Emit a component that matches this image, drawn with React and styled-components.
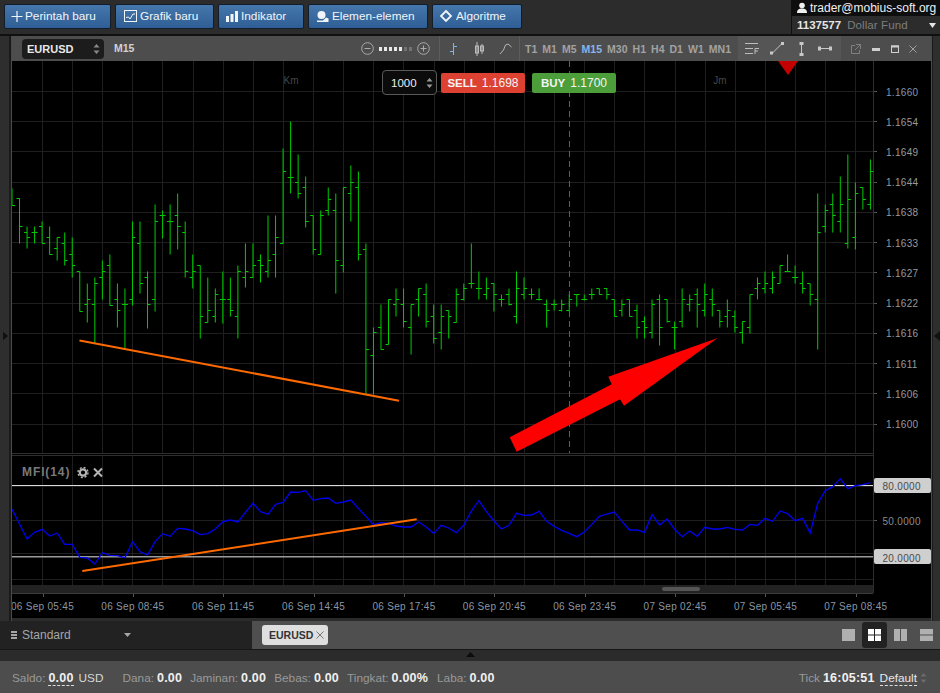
import React from "react";
import styled, { createGlobalStyle } from "styled-components";

const GlobalStyle = createGlobalStyle`
  html, body { margin: 0; padding: 0; background: #2b2b2b; }
  * { box-sizing: border-box; }
`;

// bars: [high, low, open tick, close tick], read in 3x zoom rows (y = 110 + v / 3)
const BARS = [
  [233,284,233,284],[265,400,265,349],[349,415,366,382],[349,398,366,366],[332,400,349,400],[349,433,382,433],
  [382,449,415,382],[366,466,400,450],[382,500,433,466],[484,602,484,602],[518,635,583,568],[501,698,583,518],
  [450,567,501,484],[433,585,466,585],[518,652,568,601],[535,715,583,583],[332,585,568,382],[332,550,400,518],
  [484,655,501,583],[283,602,568,332],[300,383,315,315],[283,433,332,332],[250,417,315,349],[332,500,366,484],
  [433,533,501,484],[466,685,466,617],[501,635,635,601],[535,635,617,552],[484,638,568,568],[501,618,568,601],
  [466,685,617,484],[400,532,501,484],[400,502,501,466],[433,517,450,466],[315,500,484,450],[315,500,433,382],
  [115,400,400,182],[33,250,200,200],[132,265,216,250],[198,350,232,332],[315,432,315,417],[300,433,433,315],
  [232,316,300,267],[250,550,300,451],[232,485,466,232],[165,333,250,216],[182,450,232,433],[400,850,417,718],
  [652,853,736,667],[583,718,652,718],[568,703,703,568],[535,618,583,568],[535,652,583,634],[583,733,652,583],
  [535,618,568,535],[518,652,552,634],[583,700,617,685],[583,717,667,617],[601,683,601,617],[535,635,635,552],
  [518,570,568,535],[400,533,518,518],[484,568,535,535],[501,567,552,535],[518,602,518,552],[552,587,568,568],
  [535,585,552,583],[484,638,617,535],[501,568,552,535],[535,568,552,552],[535,570,568,568],[568,652,583,601],
  [568,600,583,583],[568,602,601,583],[552,603,601,568],[552,587,552,552],[552,570,568,568],[535,567,552,552],
  [535,552,535,552],[535,567,535,552],[568,618,568,618],[568,618,601,583],[568,618,568,618],[583,683,601,652],
  [617,683,634,652],[568,685,667,583],[552,705,568,652],[568,635,568,634],[634,718,652,652],[535,652,634,568],
  [552,603,583,568],[535,652,552,583],[518,617,601,552],[535,618,568,583],[601,650,601,634],[568,652,617,601],
  [601,667,617,652],[634,700,667,634],[552,670,652,552],[501,567,535,518],[484,550,535,518],[484,550,535,501],
  [466,520,518,466],[433,484,484,484],[466,518,501,501],[484,550,518,535],[518,585,518,552],[250,718,568,366],
  [283,367,349,300],[250,367,283,316],[198,367,332,283],[132,415,400,267],[216,417,382,250],[232,298,232,267],
  [148,298,283,182],
];

// MFI(14), same zoom rows (y = 450 + v / 3)
const MFI = [
  178,222,267,247,238,258,249,283,283,322,324,342,308,316,317,323,275,305,315,275,251,259,235,237,242,254,251,237,
  215,210,216,187,160,185,193,163,157,126,127,122,151,146,144,160,156,150,175,199,224,218,220,228,231,231,216,231,
  250,226,234,248,226,183,152,185,213,237,226,190,196,195,184,214,229,241,250,260,246,223,199,192,186,214,240,240,
  247,194,225,207,238,260,243,259,232,237,237,232,238,240,223,226,205,214,183,191,212,205,249,160,122,110,86,116,
  107,104,98,
];

const PRICES = ["1.1660","1.1654","1.1649","1.1644","1.1638","1.1633","1.1627","1.1622","1.1616","1.1611","1.1606","1.1600"];
const TIMES = ["06 Sep 05:45","06 Sep 08:45","06 Sep 11:45","06 Sep 14:45","06 Sep 17:45","06 Sep 20:45","06 Sep 23:45","07 Sep 02:45","07 Sep 05:45","07 Sep 08:45"];
const FRAMES = ["T1","M1","M5","M15","M30","H1","H4","D1","W1","MN1"];

const barX = (i) => 12 + 7.53 * i;
const snap = (v) => Math.round(110 + v / 3) + 0.5;

const barsPath = BARS.map(([hi, lo, open, close], i) => {
  const x = barX(i);
  return `M${x} ${snap(hi)}V${snap(lo)}M${x - 3} ${snap(open)}H${x}M${x} ${snap(close)}H${x + 3}`;
}).join("");

const mfiPoints = MFI.map((v, i) => `${barX(i)},${450 + v / 3}`).join(" ");

const Page = styled.div`
  width: 940px;
  height: 693px;
  display: flex;
  flex-direction: column;
  overflow: hidden;
  background: #2b2b2b;
  font-family: "Liberation Sans", Arial, sans-serif;
`;

const Toolbar = styled.header`
  height: 36px;
  display: flex;
  align-items: flex-start;
  gap: 4px;
  padding: 4px 0 0 4px;
  background: #2c2c2c;
  border-bottom: 2px solid #101010;
`;

const ToolButton = styled.button`
  width: ${(p) => p.$w}px;
  height: 25px;
  display: flex;
  align-items: center;
  gap: ${(p) => p.$gap ?? 3}px;
  padding: 0 0 1px ${(p) => p.$pad ?? 5}px;
  border: 1px solid #0f1d2c;
  border-radius: 2px;
  background: linear-gradient(#4677ab, #2e5e95);
  color: #f2f5f8;
  font: 11.8px "Liberation Sans", Arial, sans-serif;
  white-space: nowrap;
`;

const Account = styled.div`
  margin-left: auto;
  margin-top: -4px;
  width: 149px;
  height: 34px;
  display: flex;
  flex-direction: column;
  white-space: nowrap;
`;

const AccountMail = styled.div`
  height: 16px;
  display: flex;
  align-items: center;
  gap: 2px;
  padding-left: 5px;
  background: #0e0e0e;
  color: #f0f0f0;
  font-size: 12px;
`;

const AccountFund = styled.div`
  flex: 1;
  display: flex;
  align-items: center;
  gap: 6px;
  padding: 0 4px 0 5px;
  background: #2c2c2c;
  border-left: 1px solid #101010;
  font-size: 11.5px;
  letter-spacing: 0.1px;
  color: #7e7e7e;
  b { color: #e6e6e6; letter-spacing: 0; }
  svg { margin-left: auto; }
`;

const Workspace = styled.main`
  height: 585px;
  display: flex;
`;

const SideRail = styled.div`
  width: ${(p) => p.$w}px;
  display: flex;
  align-items: center;
  justify-content: ${(p) => (p.$right ? "flex-end" : "flex-start")};
  padding: 14px ${(p) => (p.$right ? "0" : "3px")} 0;
  background: #2e2e2e;
  border-${(p) => (p.$right ? "left" : "right")}: 1px solid #4a4a4a;
  box-shadow: inset ${(p) => (p.$right ? "1px" : "-2px")} 0 #1a1a1a;
`;

const ChartWindow = styled.section`
  flex: 1;
  display: flex;
  flex-direction: column;
  padding-bottom: 3px;
  min-width: 0;
`;

const WindowHeader = styled.div`
  height: 25px;
  display: flex;
  background: #4d4d4d;
`;

const HeaderGroup = styled.div`
  width: ${(p) => p.$w}px;
  display: flex;
  align-items: center;
  justify-content: ${(p) => p.$justify || "flex-start"};
  padding: ${(p) => p.$pad || "0"};
  background: ${(p) => p.$bg || "transparent"};
  border-left: ${(p) => (p.$edge ? "1px solid #5c5c5c" : "none")};
  color: ${(p) => p.$color || "inherit"};
  flex: ${(p) => (p.$w ? "none" : 1)};
`;

const SymbolSelect = styled.div`
  width: 82px;
  height: 20px;
  display: flex;
  align-items: center;
  justify-content: space-between;
  padding: 0 4px 0 5px;
  border-radius: 4px;
  background: #1c1c1c;
  color: #e8e8e8;
  font-size: 11px;
  font-weight: bold;
`;

const PeriodLabel = styled.span`
  margin-left: 10px;
  margin-top: -2px;
  color: #d2d2d2;
  font-size: 10.5px;
  font-weight: bold;
`;

const ZoomDots = styled.div`
  display: flex;
  gap: 2px;
`;

const ZoomDot = styled.i`
  width: 3px;
  height: 4px;
  background: ${(p) => (p.$on ? "#e8e8e8" : "#727272")};
`;

const Frame = styled.span`
  color: ${(p) => (p.$active ? "#85b6e8" : "#a2a2a2")};
  font-size: 10.5px;
  font-weight: bold;
`;

const ToolIcon = styled.span`
  display: flex;
  margin-left: ${(p) => p.$gap || 0}px;
`;

const ChartArea = styled.div`
  position: relative;
  height: 557px;
  background: #000;
`;

const ChartSvg = styled.svg`
  display: block;
`;

const AxisText = styled.text`
  font: 10px "Liberation Sans", Arial, sans-serif;
  letter-spacing: 0.3px;
  fill: ${(p) => p.$fill || "#8a96a3"};
  text-anchor: ${(p) => p.$anchor || "start"};
`;

const Watermark = styled.text`
  font: 10px "Liberation Sans", Arial, sans-serif;
  fill: #474747;
  text-anchor: middle;
`;

const MfiTitle = styled.text`
  font: bold 12px "Liberation Sans", Arial, sans-serif;
  letter-spacing: 0.9px;
  fill: #7a7a7a;
`;

const OrderPanel = styled.div`
  position: absolute;
  left: 370px;
  top: 9px;
  display: flex;
  align-items: center;
`;

const QtyBox = styled.div`
  width: 55px;
  height: 25px;
  display: flex;
  align-items: center;
  justify-content: space-between;
  padding: 0 3px 0 8px;
  border: 1px solid #5a5a5a;
  border-radius: 4px;
  background: #0b0b0b;
  color: #eee;
  font-size: 11.5px;
`;

const TradeButton = styled.div`
  width: 84px;
  height: 20px;
  margin-left: ${(p) => p.$gap}px;
  display: flex;
  align-items: center;
  justify-content: center;
  gap: 5px;
  border-radius: 2px;
  background: ${(p) => p.$bg};
  color: #f4f4f4;
  font-size: 12px;
  b { font-size: 11.5px; }
`;

const TabBar = styled.div`
  height: 29px;
  display: flex;
  background: #4f4f4f;
  border-bottom: 1px solid #161616;
`;

const WorkspacePicker = styled.div`
  width: 252px;
  display: flex;
  align-items: center;
  gap: 5px;
  padding: 0 0 0 11px;
  background: #222;
  color: #a6a6a6;
  font-size: 12px;
  svg:last-child { margin-left: 48px; }
`;

const ChartTab = styled.div`
  width: 66px;
  height: 20px;
  margin: 4px 0 0 10px;
  display: flex;
  align-items: center;
  justify-content: space-between;
  padding: 0 4px 0 7px;
  border-radius: 3px;
  background: #dfdfdf;
  color: #333;
  font-size: 10.5px;
  font-weight: bold;
`;

const LayoutSwitch = styled.div`
  margin-left: auto;
  display: flex;
  align-items: center;
  padding-right: 1px;
  gap: 1px;
`;

const LayoutButton = styled.div`
  width: 25px;
  height: 26px;
  display: flex;
  align-items: center;
  justify-content: center;
  border-radius: 3px;
  background: ${(p) => (p.$active ? "#222" : "transparent")};
`;

const Divider = styled.div`
  height: 11px;
  display: flex;
  justify-content: center;
  padding-top: 2px;
  background: #2b2b2b;
`;

const StatusBar = styled.footer`
  height: 32px;
  display: flex;
  align-items: center;
  padding: 2px 0 0 12px;
  background: #4d4d4d;
  color: #9a9a9a;
  font-size: 11.8px;
`;

const Stat = styled.span`
  margin-left: ${(p) => p.$gap || 0}px;
  white-space: nowrap;
`;

const Value = styled.b`
  margin-left: 3px;
  color: #f0f0f0;
  font-size: 12.5px;
  letter-spacing: 0.2px;
  border-bottom: ${(p) => (p.$dotted ? "1px dashed #ddd" : "none")};
`;

const Plain = styled.span`
  margin-left: 5px;
  color: #d8d8d8;
`;

const StatusRight = styled.div`
  margin-left: auto;
  display: flex;
  align-items: center;
  padding-right: 13px;
`;

const ThemeName = styled.span`
  margin-left: 5px;
  color: #e8e8e8;
  border-bottom: 1px dashed #ddd;
`;

const SpinnerSlot = styled.span`
  display: flex;
  margin-left: 3px;
`;

const Spinner = ({ color = "#888" }) => (
  <svg width="7" height="12" viewBox="0 0 7 12">
    <path d="M3.5 1 6.5 4.5H.5zM3.5 11 .5 7.5h6z" fill={color} />
  </svg>
);

const Glyph = ({ w = 16, h = 16, children }) => (
  <svg width={w} height={h} viewBox={`0 0 ${w} ${h}`} fill="none" stroke="currentColor">
    {children}
  </svg>
);

const Chart = () => {
  const vGrid = [];
  for (let k = 0; k < 28; k++) vGrid.push(42 + 30.12 * k);
  const hGrid = PRICES.map((_, k) => 91 + 30.23 * k);
  return (
    <ChartSvg width="919" height="557" viewBox="12 61 919 557">
      {vGrid.map((x) => (
        <path key={x} d={`M${Math.round(x) + 0.5} 61V453M${Math.round(x) + 0.5} 456V585`} stroke="#1f1f1f" />
      ))}
      {hGrid.map((y) => (
        <path key={y} d={`M12 ${Math.round(y) + 0.5}H873`} stroke="#1f1f1f" />
      ))}
      {[486, 520, 553, 579].map((y) => (
        <path key={y} d={`M12 ${y + 0.5}H873`} stroke="#1f1f1f" />
      ))}
      <path d="M12 453.5H873M12 455.5H873" stroke="#2e2e2e" />
      <path d="M569.5 61V453" stroke="#5e5e5e" strokeDasharray="6 4" />
      <path d="M873.5 61V593" stroke="#2e2e2e" />

      <Watermark x="291" y="84">Km</Watermark>
      <Watermark x="720" y="84">Jm</Watermark>
      <path d={barsPath} stroke="#00cc00" fill="none" />
      <path d="M778 61H798L788 75z" fill="#c40000" />
      <path d="M79.5 340.5 399 400.7" stroke="#ff6a00" strokeWidth="2" />
      <path d="M717.7 338 608.3 376.7 611.7 384.3 509.7 437.3 516.7 451.7 620 399.3 624 405.7z" fill="#ff0000" />

      {PRICES.map((p, k) => (
        <g key={p}>
          <path d={`M874 ${Math.round(hGrid[k]) + 0.5}H877`} stroke="#555" />
          <AxisText x="886" y={hGrid[k] + 4.5} $fill={k === 0 ? "#8296ad" : "#9a9a9a"}>{p}</AxisText>
        </g>
      ))}

      <MfiTitle x="22" y="475.5">MFI(14)</MfiTitle>
      <g stroke="#b4b4b4" fill="none">
        <circle cx="83" cy="472.5" r="3.2" strokeWidth="2.2" />
        <circle cx="83" cy="472.5" r="5" strokeWidth="1.4" strokeDasharray="2 1.93" />
        <path d="M94 468.5 102 476.5M102 468.5 94 476.5" strokeWidth="2" />
      </g>

      <path d="M12 485.5H873" stroke="#dcdcdc" />
      <path d="M12 556.8H873" stroke="#9a9a9a" strokeWidth="1.5" />
      <polyline points={mfiPoints} fill="none" stroke="#0000f0" strokeWidth="1.3" />
      <path d="M82.3 571 416.7 519.3" stroke="#ff6a00" strokeWidth="2" />

      <rect x="874" y="478" width="57" height="15" rx="2" fill="#cfcfcf" />
      <AxisText x="882.5" y="490" $fill="#4a4a4a">80.0000</AxisText>
      <path d="M874 520.5H877" stroke="#555" />
      <AxisText x="882.5" y="525" $fill="#8c8c8c">50.0000</AxisText>
      <rect x="874" y="549" width="57" height="15" rx="2" fill="#cfcfcf" />
      <AxisText x="882.5" y="561.5" $fill="#4a4a4a">20.0000</AxisText>

      <rect x="12" y="585" width="861" height="8" fill="#222" />
      <rect x="662" y="587" width="38" height="4" rx="2" fill="#555" />
      <path d="M12 593.5H873" stroke="#3a3a3a" />
      {TIMES.map((t, k) => {
        const x = 42.5 + 90.37 * k;
        return (
          <g key={t}>
            <path d={`M${Math.round(x) + 0.5} 594V597`} stroke="#555" />
            <AxisText x={x} y="609.5" $anchor="middle">{t}</AxisText>
          </g>
        );
      })}
    </ChartSvg>
  );
};

export default function App() {
  return (
    <Page>
      <GlobalStyle />
      <Toolbar>
        <ToolButton $w={107} $pad={5} $gap={1}>
          <Glyph w={14} h={14}><path d="M7 2V13M1.5 7.5H12.5" strokeWidth="1.2" /></Glyph>
          Perintah baru
        </ToolButton>
        <ToolButton $w={99} $pad={7} $gap={3}>
          <Glyph w={14} h={14}>
            <rect x="1.5" y="1.5" width="12" height="11" />
            <path d="M3 8.5 5.5 8 7 10 10 5 12 5" />
          </Glyph>
          Grafik baru
        </ToolButton>
        <ToolButton $w={86} $pad={6} $gap={2}>
          <svg width="14" height="13" viewBox="0 0 14 13" fill="#f2f5f8">
            <rect x="1" y="6" width="3" height="6" />
            <rect x="5.5" y="4" width="3" height="8" />
            <rect x="10" y="1" width="3" height="11" />
          </svg>
          Indikator
        </ToolButton>
        <ToolButton $w={120} $pad={7} $gap={2}>
          <svg width="14" height="14" viewBox="0 0 14 14" fill="#f2f5f8">
            <circle cx="5.5" cy="6" r="4" />
            <path d="M1 11.5H7L10 8.5 12.5 9.5V13H1z" />
          </svg>
          Elemen-elemen
        </ToolButton>
        <ToolButton $w={90} $pad={6} $gap={3}>
          <Glyph w={14} h={14}><path d="M7 2 12 7 7 12 2 7z" strokeWidth="1.8" /></Glyph>
          Algoritme
        </ToolButton>
        <Account>
          <AccountMail>
            <svg width="12" height="12" viewBox="0 0 12 12" fill="#f0f0f0">
              <circle cx="6" cy="3.5" r="2.8" />
              <path d="M1 11C1 7.5 3 6.5 6 6.5S11 7.5 11 11z" />
            </svg>
            trader@mobius-soft.org
          </AccountMail>
          <AccountFund>
            <b>1137577</b>
            Dollar Fund
            <svg width="7" height="5" viewBox="0 0 7 5"><path d="M0 0H7L3.5 5z" fill="#e6e6e6" /></svg>
          </AccountFund>
        </Account>
      </Toolbar>

      <Workspace>
        <SideRail $w={12}>
          <svg width="6" height="10" viewBox="0 0 6 10"><path d="M0 0 6 5 0 10z" fill="#111" /></svg>
        </SideRail>
        <ChartWindow>
          <WindowHeader>
            <HeaderGroup $pad="0 0 0 10px">
              <SymbolSelect>EURUSD<Spinner /></SymbolSelect>
              <PeriodLabel>M15</PeriodLabel>
            </HeaderGroup>
            <HeaderGroup $w={81} $justify="space-between" $pad="0 9px 0 3px" $color="#aaa">
              <Glyph w={13} h={13}>
                <circle cx="6.5" cy="6.5" r="5.8" />
                <path d="M3.5 6.5H9.5" />
              </Glyph>
              <ZoomDots>
                {[1, 1, 1, 1, 1, 0, 0].map((on, i) => <ZoomDot key={i} $on={on} />)}
              </ZoomDots>
              <Glyph w={13} h={13}>
                <circle cx="6.5" cy="6.5" r="5.8" />
                <path d="M3.5 6.5H9.5M6.5 3.5V9.5" />
              </Glyph>
            </HeaderGroup>
            <HeaderGroup $w={80} $edge $pad="0 0 0 9px">
              <svg width="9" height="14" viewBox="0 0 9 14" fill="none" stroke="#7db4ea">
                <path d="M4.5 1V13M1 9.5H4.5M4.5 4.5H8" />
              </svg>
              <ToolIcon $gap={16}>
                <svg width="11" height="14" viewBox="0 0 11 14" fill="#8f8f8f" stroke="#bdbdbd">
                  <path d="M3 0V14M8 2V12" />
                  <rect x="1.5" y="4" width="3" height="7" />
                  <rect x="6.5" y="4" width="3" height="5" />
                </svg>
              </ToolIcon>
              <ToolIcon $gap={14}>
                <svg width="13" height="12" viewBox="0 0 13 12" fill="none" stroke="#b5b5b5">
                  <path d="M1 11 4.5 7 6.5 2 9 1 12.5 4" />
                </svg>
              </ToolIcon>
            </HeaderGroup>
            <HeaderGroup $w={219} $edge $justify="space-between" $pad="0 7px 0 5px">
              {FRAMES.map((f) => <Frame key={f} $active={f === "M15"}>{f}</Frame>)}
            </HeaderGroup>
            <HeaderGroup $w={103} $bg="#555" $pad="0 0 0 7px">
              <svg width="15" height="13" viewBox="0 0 15 13" fill="none" stroke="#bdbdbd">
                <path d="M0 1.5H13M0 6.5H8M0 11.5H8M10 12V6.5H14M10 9H13" />
              </svg>
              <ToolIcon $gap={10}>
                <svg width="14" height="13" viewBox="0 0 14 13" fill="#c8c8c8" stroke="#c8c8c8">
                  <path d="M2 11.5 12 1.5" />
                  <rect x=".5" y="10" width="2" height="2" />
                  <rect x="11.5" y=".5" width="2" height="2" />
                </svg>
              </ToolIcon>
              <ToolIcon $gap={15}>
                <svg width="5" height="14" viewBox="0 0 5 14" fill="#c8c8c8" stroke="#c8c8c8">
                  <path d="M2.5 1V13" />
                  <rect x="1" y=".5" width="3" height="2" />
                  <rect x="1" y="11.5" width="3" height="2" />
                </svg>
              </ToolIcon>
              <ToolIcon $gap={14}>
                <svg width="14" height="5" viewBox="0 0 14 5" fill="#c8c8c8" stroke="#c8c8c8">
                  <path d="M1 2.5H13" />
                  <rect x=".5" y="1" width="2" height="3" />
                  <rect x="11.5" y="1" width="2" height="3" />
                </svg>
              </ToolIcon>
            </HeaderGroup>
            <HeaderGroup $w={90} $justify="space-between" $pad="0 14px 0 9px">
              <svg width="12" height="12" viewBox="0 0 12 12" fill="none" stroke="#7f7f7f">
                <path d="M5 2.5H1.5V10.5H9.5V7M6 1.5H10.5V6M10.5 1.5 5 7" />
              </svg>
              <svg width="8" height="4" viewBox="0 0 8 4"><rect y="1" width="8" height="3" fill="#cfcfcf" /></svg>
              <svg width="8" height="8" viewBox="0 0 8 8" fill="none" stroke="#cfcfcf">
                <rect x=".5" y="1" width="7" height="6.5" />
                <path d="M0 1.5H8" strokeWidth="2" />
              </svg>
              <svg width="8" height="8" viewBox="0 0 8 8" fill="none" stroke="#a0a0a0">
                <path d="M.5.5 7.5 7.5M7.5.5.5 7.5" />
              </svg>
            </HeaderGroup>
          </WindowHeader>
          <ChartArea>
            <Chart />
            <OrderPanel>
              <QtyBox>1000<Spinner color="#999" /></QtyBox>
              <TradeButton $gap={4} $bg="#dd4132"><b>SELL</b>1.1698</TradeButton>
              <TradeButton $gap={7} $bg="#4b9e39"><b>BUY</b>1.1700</TradeButton>
            </OrderPanel>
          </ChartArea>
        </ChartWindow>
        <SideRail $w={9} $right>
          <svg width="6" height="10" viewBox="0 0 6 10"><path d="M6 0 0 5 6 10z" fill="#111" /></svg>
        </SideRail>
      </Workspace>

      <TabBar>
        <WorkspacePicker>
          <svg width="6" height="8" viewBox="0 0 6 8" fill="#a6a6a6">
            <rect width="6" height="2" /><rect y="3" width="6" height="2" /><rect y="6" width="6" height="2" />
          </svg>
          Standard
          <svg width="7" height="4" viewBox="0 0 7 4"><path d="M0 0H7L3.5 4z" fill="#a6a6a6" /></svg>
        </WorkspacePicker>
        <ChartTab>
          EURUSD
          <svg width="8" height="8" viewBox="0 0 8 8" fill="none" stroke="#777"><path d="M.5.5 7.5 7.5M7.5.5.5 7.5" /></svg>
        </ChartTab>
        <LayoutSwitch>
          <LayoutButton>
            <svg width="13" height="12" viewBox="0 0 13 12"><rect width="13" height="12" fill="#b0b0b0" /></svg>
          </LayoutButton>
          <LayoutButton $active>
            <svg width="13" height="12" viewBox="0 0 13 12" fill="#fff">
              <rect width="6" height="5.5" /><rect x="7" width="6" height="5.5" />
              <rect y="6.5" width="6" height="5.5" /><rect x="7" y="6.5" width="6" height="5.5" />
            </svg>
          </LayoutButton>
          <LayoutButton>
            <svg width="13" height="12" viewBox="0 0 13 12" fill="#b0b0b0">
              <rect width="6" height="12" /><rect x="7" width="6" height="12" />
            </svg>
          </LayoutButton>
          <LayoutButton>
            <svg width="13" height="12" viewBox="0 0 13 12" fill="#b0b0b0">
              <rect width="13" height="5.5" /><rect y="6.5" width="13" height="5.5" />
            </svg>
          </LayoutButton>
        </LayoutSwitch>
      </TabBar>
      <Divider>
        <svg width="9" height="5" viewBox="0 0 9 5"><path d="M4.5 0 9 5H0z" fill="#0c0c0c" /></svg>
      </Divider>
      <StatusBar>
        <Stat>Saldo:<Value $dotted>0.00</Value><Plain>USD</Plain></Stat>
        <Stat $gap={19}>Dana:<Value>0.00</Value></Stat>
        <Stat $gap={8}>Jaminan:<Value>0.00</Value></Stat>
        <Stat $gap={8}>Bebas:<Value>0.00</Value></Stat>
        <Stat $gap={8}>Tingkat:<Value>0.00%</Value></Stat>
        <Stat $gap={9}>Laba:<Value>0.00</Value></Stat>
        <StatusRight>
          <span>Tick</span>
          <Value>16:05:51</Value>
          <ThemeName>Default</ThemeName>
          <SpinnerSlot><Spinner color="#6a6a6a" /></SpinnerSlot>
        </StatusRight>
      </StatusBar>
    </Page>
  );
}
